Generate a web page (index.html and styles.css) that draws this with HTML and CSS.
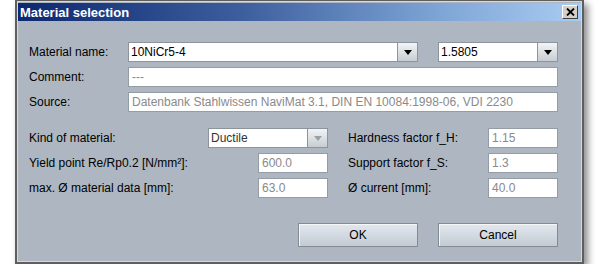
FILE: index.html
```html
<!DOCTYPE html>
<html lang="en">
<head>
    <meta charset="UTF-8">
    <title>Material selection</title>
    <link rel="stylesheet" href="styles.css">
</head>
<body>
    <div class="ventana">
        <div class="titulo">
            <span>Material selection</span>
            <button class="cerrar">
                <svg width="9" height="8" viewBox="0 0 9 8"><path d="M1 0.5 L8 7.5 M8 0.5 L1 7.5" stroke="#000" stroke-width="1.8"/></svg>
            </button>
        </div>

        <div class="contenido">
            <div class="bloque-arriba">
                <label>Material name:</label>
                <div class="combo">
                    <span class="combo-texto">10NiCr5-4</span>
                    <span class="combo-flecha"><i></i></span>
                </div>
                <div class="combo derecha">
                    <span class="combo-texto">1.5805</span>
                    <span class="combo-flecha"><i></i></span>
                </div>

                <label>Comment:</label>
                <div class="campo ancho gris">---</div>

                <label>Source:</label>
                <div class="campo ancho gris">Datenbank Stahlwissen NaviMat 3.1, DIN EN 10084:1998-06, VDI 2230</div>
            </div>

            <div class="bloque-medio">
                <label>Kind of material:</label>
                <div class="combo desactivado">
                    <span class="combo-texto">Ductile</span>
                    <span class="combo-flecha"><i></i></span>
                </div>
                <label class="etiqueta-derecha">Hardness factor f_H:</label>
                <div class="campo gris">1.15</div>

                <label>Yield point Re/Rp0.2 [N/mm&sup2;]:</label>
                <div class="campo corto gris">600.0</div>
                <label class="etiqueta-derecha">Support factor f_S:</label>
                <div class="campo gris">1.3</div>

                <label>max. &Oslash; material data [mm]:</label>
                <div class="campo corto gris">63.0</div>
                <label class="etiqueta-derecha">&Oslash; current [mm]:</label>
                <div class="campo gris">40.0</div>
            </div>

            <div class="botones">
                <button class="boton">OK</button>
                <button class="boton">Cancel</button>
            </div>
        </div>
    </div>
</body>
</html>
```

FILE: styles.css
```css
body {
    margin: 0;
    padding: 0 0 0 15px;
    background-color: #fff;
    font-family: "Liberation Sans", Arial, sans-serif;
    font-size: 12px;
}

.ventana {
    width: 563px;
    height: 258px;
    border: 2px solid #5e5e5e;
    border-top-width: 1px;
    padding: 1px;
    padding-top: 2px;
    background-color: #aeb7c1;
    box-shadow: inset 0 0 0 1px #d8d8d8, 4px 4px 7px rgba(0, 0, 0, 0.45);
}

.titulo {
    height: 18px;
    display: flex;
    align-items: center;
    justify-content: space-between;
    padding: 0 3px 0 2px;
    background: linear-gradient(to right, #0c2870, #3d5f9e 40%, #7fa5d6 75%, #a8ccf2);
    color: #fff;
    font-weight: bold;
    font-size: 13px;
}

.cerrar {
    width: 16px;
    height: 14px;
    padding: 0;
    display: flex;
    align-items: center;
    justify-content: center;
    background-color: #d4d0c8;
    border: 1px solid;
    border-color: #fff #404040 #404040 #fff;
}

.contenido {
    padding: 21px 0 0 11px;
}

label {
    color: #000;
    white-space: nowrap;
}

.bloque-arriba {
    display: grid;
    grid-template-columns: 99px 290px 140px;
    row-gap: 5px;
    align-items: center;
}

.bloque-medio {
    margin-top: 16px;
    display: grid;
    grid-template-columns: 179px 120px 160px 70px;
    row-gap: 5px;
    align-items: center;
}

.etiqueta-derecha {
    padding-left: 20px;
}

.campo {
    height: 20px;
    box-sizing: border-box;
    border: 1px solid #949ca4;
    background-color: #fff;
    padding: 0 3px;
    line-height: 18px;
    white-space: nowrap;
    overflow: hidden;
}

.campo.ancho {
    grid-column: span 2;
}

.campo.corto {
    width: 70px;
    justify-self: end;
}

.gris {
    color: #8a8a8a;
}

.combo {
    height: 20px;
    box-sizing: border-box;
    border: 1px solid #8c959e;
    background-color: #fff;
    display: flex;
}

.combo.derecha {
    width: 120px;
    justify-self: end;
}

.combo-texto {
    flex: 1;
    padding: 0 2px;
    line-height: 18px;
    color: #000;
}

.desactivado .combo-texto {
    color: #333;
}

.combo-flecha {
    width: 19px;
    border-left: 1px solid #8c959e;
    background: linear-gradient(#f2f4f6, #c7cdd3);
    display: flex;
    align-items: center;
    justify-content: center;
}

.combo-flecha i {
    width: 0;
    height: 0;
    border-left: 4px solid transparent;
    border-right: 4px solid transparent;
    border-top: 5px solid #000;
}

.desactivado .combo-flecha i {
    border-top-color: #9aa0a6;
}

.botones {
    margin-top: 25px;
    width: 529px;
    display: flex;
    justify-content: flex-end;
    gap: 20px;
}

.boton {
    width: 120px;
    height: 24px;
    font-family: "Liberation Sans", Arial, sans-serif;
    font-size: 12px;
    color: #000;
    border: 1px solid #838b93;
    box-shadow: inset 1px 1px 0 #f4f6f8;
    background: linear-gradient(#e3e8ee, #c3cbd3);
}
```
